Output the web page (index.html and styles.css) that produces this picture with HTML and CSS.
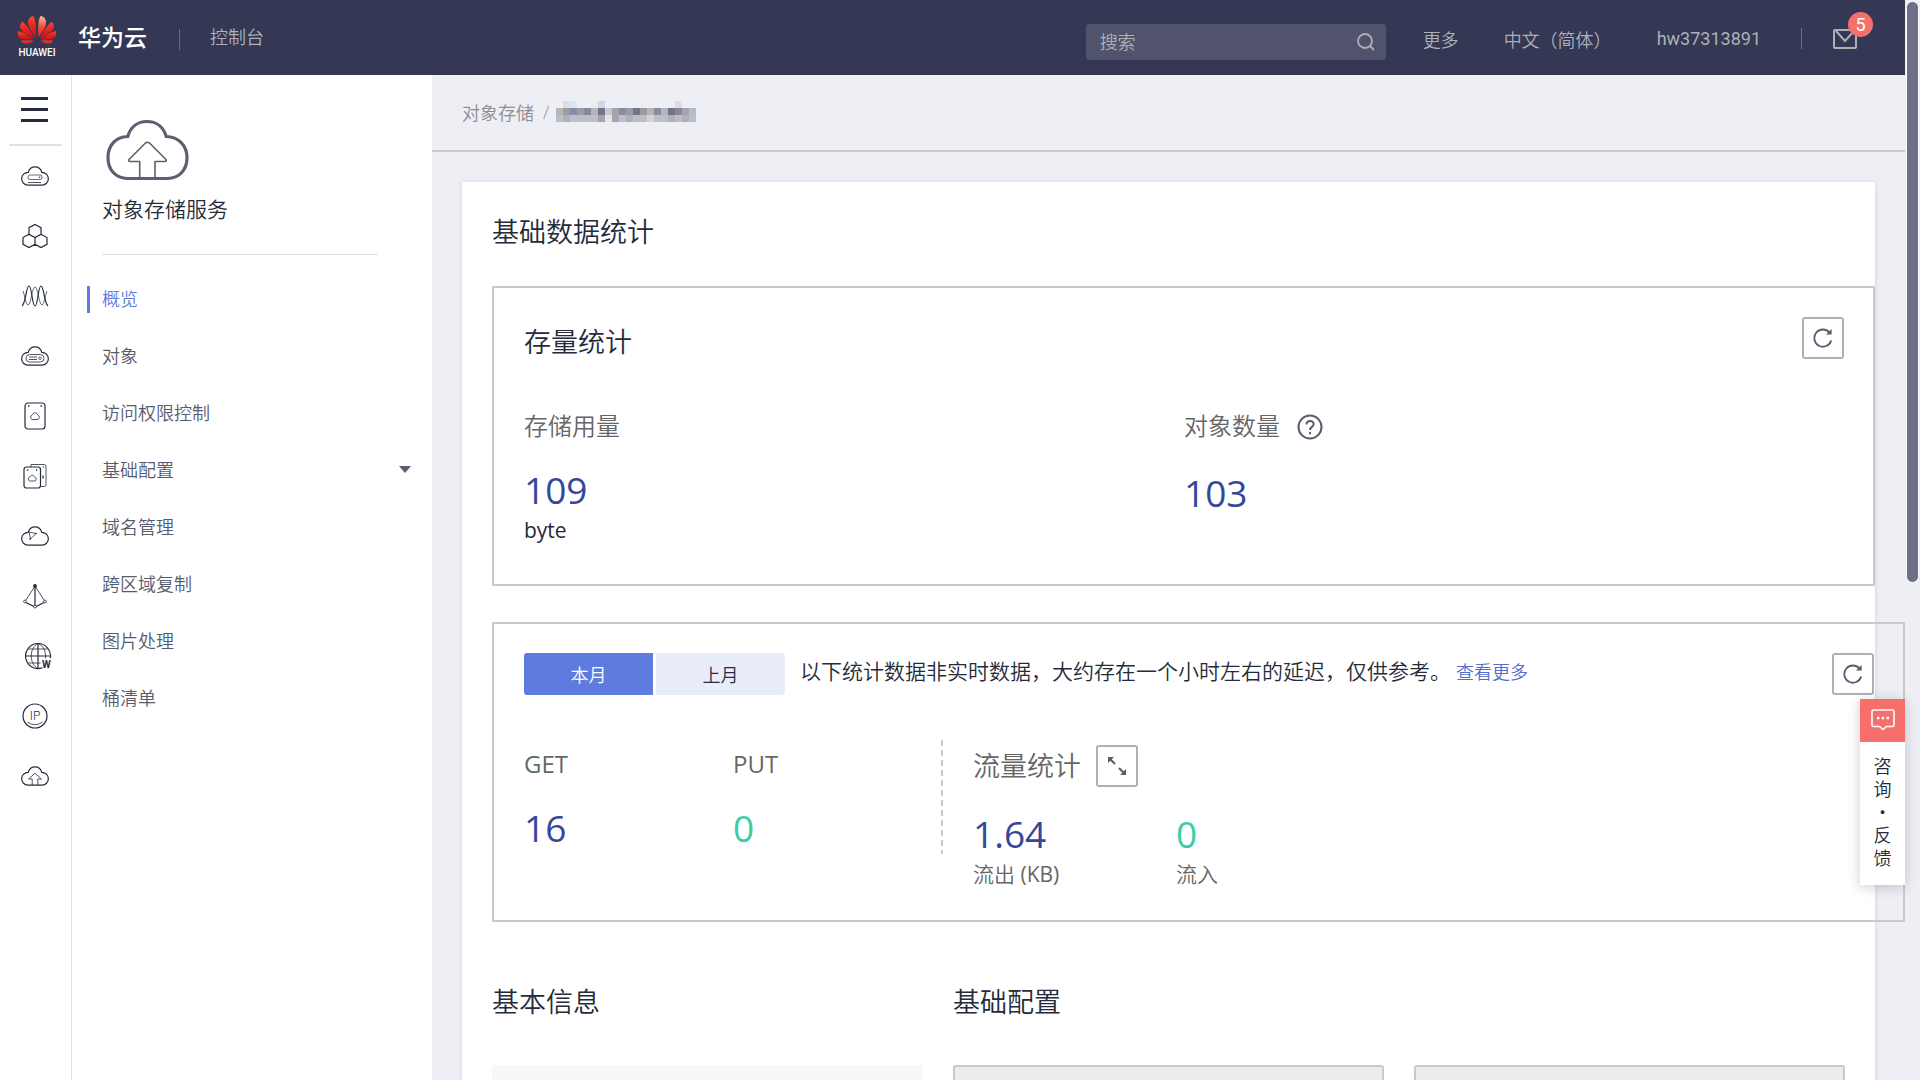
FILE: index.html
```html
<!DOCTYPE html>
<html lang="zh-CN">
<head>
<meta charset="utf-8">
<title>对象存储服务</title>
<link rel="stylesheet" href="styles.css">
</head>
<body>
<svg class="defs" aria-hidden="true">
  <symbol id="refresh" viewBox="0 0 20 20">
    <path d="M18.2 12.5A8.6 8.6 0 1 1 16.4 4.4" fill="none" stroke="currentColor" stroke-width="1.8"/>
    <path d="M18.6 1v5.6H13z" fill="currentColor"/>
  </symbol>
  <symbol id="cloud" viewBox="0 0 28 20">
    <path d="M7 19.2A6.3 6.3 0 0 1 7.2 6.3C8.200 2.900 10.700.8 14 .8s5.800 2.100 6.800 5.500A6.300 6.300 0 0 1 21 19.200z"/>
  </symbol>
</svg>
<div class="shell">
  <div class="page">
    <header class="topbar">
      <a class="brand" href="#">
        <svg width="42" height="46" viewBox="0 0 42 46" aria-hidden="true">
          <defs>
            <linearGradient id="petal" x1="0" y1="0" x2="0" y2="1"><stop offset="0" stop-color="#f04a35"/><stop offset=".5" stop-color="#e8231a"/><stop offset="1" stop-color="#c41420"/></linearGradient>
            <linearGradient id="petal-light" x1="0" y1="0" x2="0" y2="1"><stop offset="0" stop-color="#fbbd94"/><stop offset=".55" stop-color="#ee4a34"/><stop offset="1" stop-color="#e5201a"/></linearGradient>
          </defs>
          <g transform="translate(1 1)" fill="url(#petal)">
            <path d="M18.600 22C19.300 14 18.800 5 16.500 1c-3.500.3-5.500 3-5.500 6.500 0 4.500 4 10 7.600 14.500z"/>
            <path d="M17.600 23C14 17 9 9 5.200 6.700 2.500 9.500 2.600 13 4.800 15.500 8 19 13.500 21.500 17.600 23z"/>
            <path d="M16.600 24.200C12 21 5.500 16.800 1 16c-1 4 .5 7.200 4.500 8 4 .7 8.500.5 11.100.2z"/>
            <path d="M16.400 25.400H4c1.200 3.300 4.500 4.500 7.400 3.400 2-.9 3.800-2.400 5-3.400z"/>
            <path d="M22.400 23C26 17 31 9 34.800 6.700c2.700 2.800 2.600 6.300.4 8.800-3.200 3.500-8.700 6-12.800 7.500z"/>
            <path d="M23.400 24.200C28 21 34.500 16.800 39 16c1 4-.5 7.200-4.500 8-4 .7-8.500.5-11.100.2z"/>
            <path d="M23.600 25.400H36c-1.200 3.300-4.500 4.500-7.400 3.400-2-.9-3.800-2.400-5-3.400z"/>
            <path fill="url(#petal-light)" d="M21.400 22C20.700 14 21.200 5 23.500 1c3.500.3 5.500 3 5.500 6.500 0 4.500-4 10-7.600 14.500z"/>
          </g>
          <text class="brand-word" x="21" y="42" text-anchor="middle">HUAWEI</text>
        </svg>
        <span class="brand-name">华为云</span>
      </a>
      <span class="bar-line"></span>
      <a class="top-link console" href="#">控制台</a>
      <form class="search">
        <input type="text" placeholder="搜索" aria-label="搜索">
        <button type="button" aria-label="搜索">
          <svg width="20" height="20" viewBox="0 0 20 20" fill="none" stroke="currentColor" stroke-width="1.800"><circle cx="9" cy="9" r="7"/><path d="m14 14 4 4"/></svg>
        </button>
      </form>
      <nav class="top-nav">
        <a class="top-link more" href="#">更多</a>
        <a class="top-link lang" href="#">中文（简体）</a>
        <a class="top-link user" href="#">hw37313891</a>
        <span class="bar-line"></span>
        <a class="mail" href="#" aria-label="消息">
          <svg width="24" height="20" viewBox="0 0 24 20" fill="none" stroke="currentColor" stroke-width="2"><rect x="1" y="1" width="22" height="18" rx="1"/><path d="m3 2 9 10 9-10"/></svg>
          <span class="badge">5</span>
        </a>
      </nav>
    </header>

    <div class="body">
      <nav class="rail" aria-label="服务列表">
        <button class="burger" type="button" aria-label="展开"><span></span><span></span><span></span></button>
        <a href="#" aria-label="弹性云服务器"><svg width="28" height="20"><use href="#cloud"/><rect x="7" y="9" width="14" height="4.500" rx="2" stroke-width=".7"/><path d="M7 16.500h13" stroke-width=".8"/><circle cx="18.600" cy="11.200" r=".8" fill="currentColor" stroke="none"/></svg></a>
        <a href="#" aria-label="云容器"><svg width="26" height="26"><path d="M13 1.500 19 4.700v6.600l-6 3.200-6-3.200V4.700zM7 11.300l6 3.200v6.800l-6 3.200-6-3.200v-6.800zM19 11.300l6 3.200v6.800l-6 3.200-6-3.200v-6.800z"/></svg></a>
        <a href="#" aria-label="弹性伸缩"><svg width="28" height="22"><path d="M1 21C5 18 5 1 8 1s3 20 6 20S17 1 20 1s3 17 7 20"/><path d="M2 6c2 5 3 14 5 14C10 20 11 2 14 2s4 18 7 18c2 0 3-9 5-14" stroke-width=".7"/></svg></a>
        <a href="#" aria-label="裸金属服务器"><svg width="28" height="20"><use href="#cloud"/><rect x="5" y="8.500" width="18" height="7.500" rx="3.700" stroke-width=".8"/><path d="M8 11h8M8 13.500h8" stroke-width=".8"/><circle cx="19" cy="12.200" r="1.300" stroke-width=".7"/></svg></a>
        <a href="#" aria-label="云硬盘"><svg width="22" height="28"><rect x="1" y="1" width="20" height="26" rx="3"/><path d="M8 17.500a2.500 2.500 0 0 1 .2-4.500c1-3 4.600-3 5.600 0a2.500 2.500 0 0 1 .2 4.500z" stroke-width=".8"/><path d="M4 4h1.500M16.500 4H18" stroke-width="1.600"/></svg></a>
        <a href="#" aria-label="云备份"><svg width="24" height="26"><path d="M8 4V1.500h13q2 0 2 2v18q0 2-2 2h-3" stroke-width=".8"/><rect x="1" y="4" width="16.500" height="21" rx="2.500"/><path d="M6.500 18a2 2 0 0 1 .2-3.800c1-2.500 4-2.500 5 0A2 2 0 0 1 12 18z" stroke-width=".8"/><path d="M4 7h1.300M13 7h1.300M20.500 4.500v-1M20 12.500v3" stroke-width="1.300"/></svg></a>
        <a href="#" aria-label="云专线"><svg width="28" height="20"><use href="#cloud"/><path d="m8 6 1.500 7L15 7.500 8 6" stroke-width=".8"/><circle cx="9.300" cy="13" r=".6" fill="currentColor" stroke-width=".6"/><circle cx="15" cy="7.500" r=".5" fill="currentColor" stroke-width=".6"/></svg></a>
        <a href="#" aria-label="负载均衡"><svg width="24" height="26"><path d="M12 3 2 18.500M12 3l10 15.500" stroke-width=".8"/><path d="M12 3v20M3 19.500l9 4.500 9-4.500"/><g fill="#fff" stroke-width=".8"><circle cx="2" cy="18.500" r="1.400"/><circle cx="22" cy="18.500" r="1.400"/><circle cx="12" cy="23.600" r="1.400"/></g><circle cx="12" cy="3" r="1.300" fill="currentColor"/></svg></a>
        <a class="globe" href="#" aria-label="域名"><svg width="28" height="28"><path d="M18.500 25.700A12.500 12.500 0 1 1 26.400 16"/><path d="M14 2v24M1.500 14h25"/><path d="M4.500 7h19M4.500 21h12M14 1.500c-9 4-9 21 0 25M14 1.500c6 2.500 8 8 7.500 15" stroke-width=".8"/><text class="globe-w" x="18" y="26">W</text></svg></a>
        <a href="#" aria-label="弹性公网IP"><svg width="26" height="26"><circle cx="13" cy="13" r="12"/><path d="M5.500 19q7.500 5.500 15 0" stroke-width=".8"/><text class="ip-word" x="13" y="17" text-anchor="middle">IP</text></svg></a>
        <a href="#" aria-label="对象存储"><svg width="28" height="20"><use href="#cloud"/><path d="M11.200 19v-6H7.500L14 7.300l6.500 5.700h-3.700v6" stroke-width=".8"/></svg></a>
      </nav>

      <aside class="side">
        <svg class="service-icon" width="86" height="62" viewBox="0 0 86 62" fill="none" stroke="#5a6070" aria-hidden="true">
          <path stroke-width="3.200" d="M23.500 59.500C11.500 59.500 4 50.500 4 38.700 4 26.500 11.500 17.800 23.800 17.500 26.500 8 33.500 2.500 43 2.500s16.500 5.500 19.200 15C74.500 17.800 83 26.500 83 38.700c0 11.800-7.500 20.800-19.500 20.800z"/>
          <path stroke-width="1.600" stroke-linejoin="round" d="M35.700 59V42.500H26q-2-.3-1-2L41.500 24q2-1.500 4 0L62 40.500q1 1.700-1 2H51V59"/>
        </svg>
        <h1 class="service-name">对象存储服务</h1>
        <ul class="menu">
          <li><a class="active" href="#">概览</a></li>
          <li><a href="#">对象</a></li>
          <li><a href="#">访问权限控制</a></li>
          <li><a href="#">基础配置<span class="caret"></span></a></li>
          <li><a href="#">域名管理</a></li>
          <li><a href="#">跨区域复制</a></li>
          <li><a href="#">图片处理</a></li>
          <li><a href="#">桶清单</a></li>
        </ul>
      </aside>

      <main class="content">
        <nav class="crumbs" aria-label="位置">
          <a href="#">对象存储</a><span>/</span>
          <svg width="140" height="21" viewBox="0 0 20 3" shape-rendering="crispEdges" aria-hidden="true">
            <path fill="#b5b5ba" d="M0 1h20v1H0z"/><path fill="#bcbfca" d="M0 2h20v1H0z"/>
            <path fill="#dfdfe2" d="M1 0h1v1H1zM17 0h1v1h-1z"/><path fill="#dde6ef" d="M2 0h1v1H2z"/><path fill="#ececec" d="M5 0h1v1H5z"/><path fill="#d2d5e2" d="M6 0h1v1H6z"/>
            <path fill="#9c9c9f" d="M1 1h1v1H1zM4 1h-1v1h1zM12 1h1v1h-1zM10 1h1v1h-1z"/><path fill="#8190a6" d="M2 1h1v1H2zM9 1h1v1H9zM14 1h1v1h-1z"/><path fill="#858a9a" d="M4 1h1v1H4zM17 1h1v1h-1z"/><path fill="#71768c" d="M6 1h1v1H6zM11 1h1v1h-1zM16 1h1v1h-1z"/><path fill="#c8c8cf" d="M7 1h1v1H7z"/><path fill="#a8a2ac" d="M8 1h1v1H8zM8 2h1v1H8zM18 1h1v1h-1zM6 2h1v1H6z"/><path fill="#b2bccb" d="M19 1h1v1h-1z"/>
            <path fill="#e5e6eb" d="M7 2h1v1H7z"/><path fill="#b0b0b6" d="M1 2h1v1H1zM10 2h1v1h-1zM16 2h1v1h-1zM18 2h1v1h-1z"/><path fill="#d5d4d2" d="M13 2h1v1h-1z"/>
          </svg>
        </nav>

        <div class="card">
          <h2 class="title">基础数据统计</h2>

          <section class="panel">
            <div class="panel-head">
              <h3 class="title">存量统计</h3>
              <button class="icon-btn" type="button" aria-label="刷新"><svg width="20" height="20"><use href="#refresh"/></svg></button>
            </div>
            <div class="stock">
              <div>
                <p class="label">存储用量</p>
                <p class="value">109</p>
                <p class="unit dark">byte</p>
              </div>
              <div>
                <p class="label with-help">对象数量
                  <svg width="26" height="26" viewBox="0 0 26 26" fill="none" stroke="#575d6c" stroke-width="2" role="img" aria-label="帮助"><circle cx="13" cy="13" r="11.500"/><path d="M9.500 10.500c0-4.700 7.200-4.700 7.200-.4 0 2.700-3.700 2.900-3.700 5.800M13 18v2.200"/></svg>
                </p>
                <p class="value">103</p>
              </div>
            </div>
          </section>

          <section class="panel wide">
            <div class="panel-head">
              <div class="tabs">
                <button class="tab on" type="button">本月</button>
                <button class="tab" type="button">上月</button>
              </div>
              <p class="note">以下统计数据非实时数据，大约存在一个小时左右的延迟，仅供参考。<a href="#">查看更多</a></p>
              <button class="icon-btn" type="button" aria-label="刷新"><svg width="20" height="20"><use href="#refresh"/></svg></button>
            </div>
            <div class="usage">
              <div class="requests">
                <div>
                  <p class="label">GET</p>
                  <p class="value">16</p>
                </div>
                <div>
                  <p class="label">PUT</p>
                  <p class="value green">0</p>
                </div>
              </div>
              <svg class="dash" width="2" height="114" aria-hidden="true"><path d="M1 0v114" stroke="#c9c9c9" stroke-width="2" stroke-dasharray="6 4"/></svg>
              <div class="traffic">
                <div class="traffic-head">
                  <h3>流量统计</h3>
                  <button class="icon-btn" type="button" aria-label="展开图表"><svg width="20" height="20" viewBox="0 0 20 20" fill="none" stroke="currentColor" stroke-width="2"><path d="m2.500 2.500 5.500 5.500M12 12l5.500 5.500"/><path d="M1 1h6L1 7zM19 19h-6l6-6z" fill="currentColor" stroke="none"/></svg></button>
                </div>
                <div class="flows">
                  <div>
                    <p class="value">1.64</p>
                    <p class="unit">流出 <span class="latin">(KB)</span></p>
                  </div>
                  <div>
                    <p class="value green">0</p>
                    <p class="unit">流入</p>
                  </div>
                </div>
              </div>
            </div>
          </section>

          <div class="info">
            <section>
              <h2 class="title">基本信息</h2>
              <div class="box plain"></div>
            </section>
            <section class="config">
              <h2 class="title">基础配置</h2>
              <div class="boxes">
                <div class="box"></div>
                <div class="box"></div>
              </div>
            </section>
          </div>
        </div>
      </main>
    </div>

    <a class="feedback" href="#">
      <span class="feedback-icon">
        <svg width="24" height="22" viewBox="0 0 24 22" fill="none" stroke="#fff" stroke-width="1.600"><path d="M2.500 1h19q1.500 0 1.500 1.500V16q0 1.500-1.500 1.500h-6L12 20.500l-3.500-3h-6Q1 17.500 1 16V2.500Q1 1 2.500 1z"/><path d="M6 9h2.500M10.700 9h2.500M15.500 9H18" stroke-width="2.500"/></svg>
      </span>
      <span class="feedback-text">咨<br>询<br>·<br>反<br>馈</span>
    </a>
  </div>
  <div class="scroll"><div class="thumb"></div></div>
</div>
</body>
</html>
```
FILE: styles.css
```css
* { box-sizing: border-box; }

body, h1, h2, h3, p, ul { margin: 0; padding: 0; font-weight: 350; }

body {
  height: 100vh;
  overflow: hidden;
  background: #eeeff4;
  color: #252b3a;
  font-family: "Open Sans", "Noto Sans", "Noto Sans CJK SC", sans-serif;
  font-size: 18px;
}

a { color: inherit; text-decoration: none; }
ul { list-style: none; }
button, input { font: inherit; color: inherit; border: 0; background: none; padding: 0; }
svg { display: block; flex: none; }
.defs { position: absolute; width: 0; height: 0; }

.shell { display: flex; height: 100vh; }
.page { position: relative; flex: 1; min-width: 0; display: flex; flex-direction: column; }

.scroll { width: 15px; padding: 1px; }
.thumb {
  height: 54%;
  border: 1px solid #fff;
  border-radius: 7px;
  background: #6d7089;
}

/* top bar */
.topbar {
  flex: none;
  display: flex;
  align-items: center;
  height: 75px;
  padding: 0 48px 2px 16px;
  background: #343854;
  color: #adb0b8;
  font-family: Roboto, "Noto Sans CJK SC", sans-serif;
}
.brand { display: flex; align-items: center; gap: 20px; color: #fff; }
.brand-word { fill: #fff; font-family: Roboto, sans-serif; font-size: 10px; font-weight: 500; }
.brand-name { padding-bottom: 2px; font-size: 23px; font-weight: 500; }
.bar-line { width: 1px; height: 21px; margin-top: 5px; background: #6a6d82; }
.brand + .bar-line { margin-left: 32px; }
.top-link { white-space: nowrap; }
.console { margin-left: 30px; padding-bottom: 2px; }
.search {
  display: flex;
  align-items: center;
  width: 300px;
  height: 36px;
  margin: 11px 0 0 auto;
  padding: 0 10px 0 14px;
  border-radius: 3px;
  background: #50536b;
}
.search input { flex: 1; min-width: 0; outline: 0; }
.search input::placeholder { color: #adb0b8; opacity: 1; }
.top-nav { display: flex; align-items: center; padding-top: 4px; }
.more { margin-left: 37px; }
.lang { margin-left: 45px; }
.user { margin-left: 45px; font-weight: 400; }
.top-nav .bar-line { margin: 0 0 0 40px; }
.mail { position: relative; margin-left: 31px; }
.badge {
  position: absolute;
  left: 15px;
  top: -17px;
  width: 25px;
  height: 25px;
  border-radius: 50%;
  background: #f66f6a;
  color: #fff;
  font-weight: 400;
  line-height: 25px;
  text-align: center;
}

.body { flex: 1; min-height: 0; display: flex; overflow: hidden; }

/* icon rail */
.rail {
  width: 72px;
  flex: none;
  padding: 0 9px;
  border-right: 1px solid #dfe1e6;
  background: #fff;
  color: #252b3a;
}
.burger {
  display: flex;
  flex-direction: column;
  align-items: center;
  justify-content: center;
  gap: 8px;
  width: 100%;
  height: 71px;
  padding-right: 2px;
  border-bottom: 2px solid #dfe1e6;
}
.burger span { width: 27px; height: 3px; background: #252b3a; }
.rail a {
  display: flex;
  align-items: center;
  justify-content: center;
  height: 60px;
  padding-right: 2px;
}
.rail a svg { fill: none; stroke: currentColor; stroke-width: 1.2px; }
.rail a.globe { padding: 0 0 0 5px; }
.rail text { fill: currentColor; stroke: none; font-family: Roboto, sans-serif; }
.globe-w { font-size: 10px; font-weight: 700; }
.ip-word { font-size: 12px; font-weight: 300; }

/* service menu */
.side { width: 360px; flex: none; padding: 44px 0 0 30px; background: #fff; }
.service-icon { margin-left: 2px; }
.service-name {
  width: 276px;
  margin-bottom: 16px;
  padding: 12px 0 29px;
  border-bottom: 1px solid #dfe1e6;
  font-size: 21px;
  line-height: 32px;
}
.menu a { display: flex; align-items: center; height: 57px; padding-bottom: 3px; color: #575d6c; }
.menu .active { color: #5e7ce0; }
.menu .active::before {
  content: "";
  width: 3px;
  height: 27px;
  margin: 2px 12px 0 -15px;
  background: #5e7ce0;
}
.caret {
  margin: 1px 21px 0 auto;
  border: 6px solid transparent;
  border-top: 7px solid #575d6c;
  border-bottom: 0;
}

/* content */
.content { flex: 1; min-width: 0; }
.crumbs {
  display: flex;
  align-items: center;
  height: 77px;
  padding: 0 30px 2px;
  border-bottom: 2px solid #c9c9cb;
  color: #8a8e99;
}
.crumbs span { margin: 0 7px 0 9px; }

.card {
  min-height: 100%;
  margin: 30px 30px 0;
  padding: 25px 0 0 30px;
  background: #fff;
  box-shadow: 0 1px 4px rgba(80, 85, 110, .2);
}
.title { font-size: 27px; line-height: 50px; }

.panel { height: 300px; margin-top: 29px; padding: 29px 29px 29px 30px; border: 2px solid #c9c9c9; }
.panel.wide { margin: 36px -30px 0 0; }
.panel-head { display: flex; align-items: flex-start; }
.icon-btn {
  display: flex;
  align-items: center;
  justify-content: center;
  width: 42px;
  height: 42px;
  flex: none;
  border: 2px solid #adb0b8;
  border-radius: 3px;
  color: #575d6c;
}
.panel-head .icon-btn { margin-left: auto; }

.label { color: #666; font-size: 24px; line-height: 36px; }
.value { color: #344899; font-size: 37px; font-weight: 400; line-height: 48px; }
.value.green { color: #3dcca6; }
.unit { color: #666; font-size: 21px; line-height: 32px; }
.unit.dark, .latin { font-weight: 400; }
.unit.dark { color: #252b3a; }

.stock { display: grid; grid-template-columns: 1fr 1fr; margin-top: 41px; }
.stock .value { margin-top: 22px; }
.with-help { display: flex; align-items: center; gap: 17px; padding-bottom: 3px; }
.with-help svg { margin-top: 2px; }

.tabs { display: flex; gap: 3px; }
.tab { width: 129px; height: 42px; border-radius: 3px 0 0 3px; background: #5e7ce0; color: #fff; }
.tab + .tab { border-radius: 0 3px 3px 0; background: #e9edfa; color: #252b3a; }
.note { margin-left: 15px; font-size: 21px; line-height: 36px; }
.note a { margin-left: 5px; color: #526ecc; font-size: 18px; }

.usage { display: flex; margin-top: 45px; }
.note + .icon-btn { margin-bottom: 0; }
.requests { display: grid; grid-template-columns: 209px 208px; padding-top: 6px; }
.requests .label { font-weight: 400; }
.requests .value { margin-top: 22px; }
.traffic { margin-left: 30px; padding-top: 5px; }
.traffic-head { display: flex; align-items: center; gap: 15px; color: #666; }
.traffic-head h3 { font-size: 27px; line-height: 42px; }
.flows { display: grid; grid-template-columns: 203px auto; margin-top: 23px; }

.info { display: grid; grid-template-columns: repeat(3, 1fr); gap: 30px; margin: 55px 30px 0 0; }
.config { grid-column: span 2; }
.boxes { display: grid; grid-template-columns: 1fr 1fr; gap: 30px; }
.box { height: 150px; margin-top: 38px; border: 2px solid #c9c9c9; border-radius: 3px; background: #ececec; }
.box.plain { border: 0; background: #f7f9f9; }

/* feedback tab pinned over the page edge */
.feedback {
  position: absolute;
  right: 0;
  top: 699px;
  width: 45px;
  background: #fff;
  box-shadow: 0 2px 12px rgba(0, 0, 0, .2);
}
.feedback-icon { display: flex; align-items: center; justify-content: center; height: 43px; padding-bottom: 2px; background: #f66f6a; }
.feedback-text { display: block; padding: 12px 0 16px; line-height: 23px; text-align: center; font-family: "Noto Sans CJK SC", sans-serif; }
```
